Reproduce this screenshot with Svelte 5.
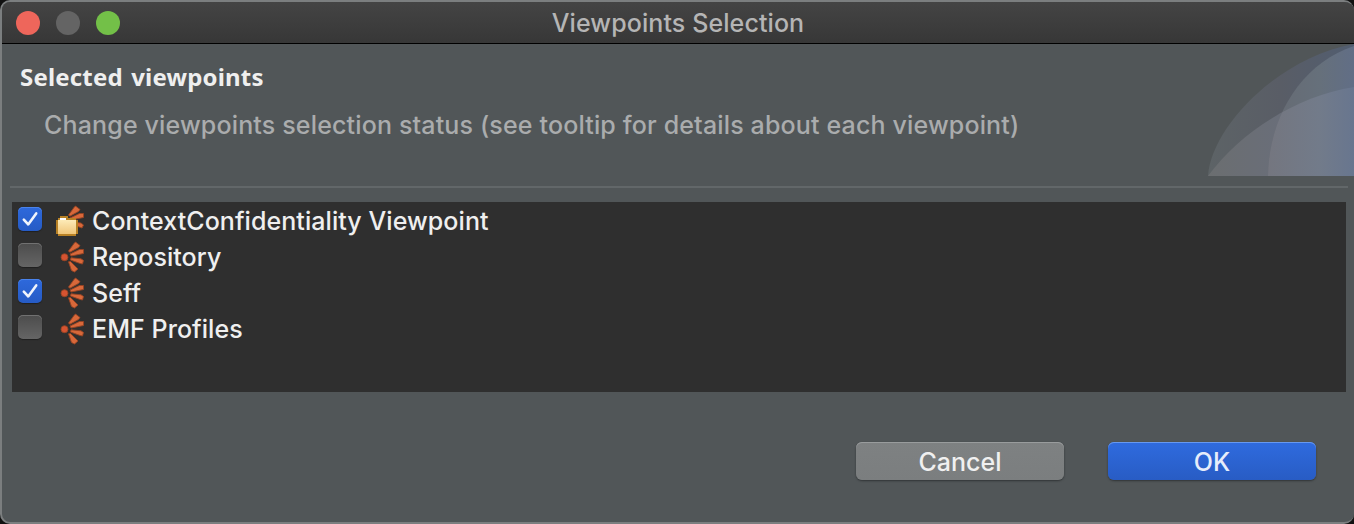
<script>
  let items = $state([
    { label: 'ContextConfidentiality Viewpoint', checked: true, folder: true },
    { label: 'Repository', checked: false, folder: false },
    { label: 'Seff', checked: true, folder: false },
    { label: 'EMF Profiles', checked: false, folder: false }
  ]);
</script>

<div class="window">
  <header class="titlebar">
    <div class="lights"><i class="close"></i><i class="minimise"></i><i class="zoom"></i></div>
    <span class="title">Viewpoints Selection</span>
  </header>

  <section class="banner">
    <div class="copy">
      <h1>Selected viewpoints</h1>
      <p>Change viewpoints selection status (see tooltip for details about each viewpoint)</p>
    </div>
    <svg class="art" width="146" height="132" viewBox="0 0 146 132">
      <defs>
        <linearGradient id="outer" x1="0" x2="1" y1="0" y2="0">
          <stop offset="0" stop-color="#5d6366" /><stop offset=".5" stop-color="#595d66" /><stop offset="1" stop-color="#515d70" />
        </linearGradient>
        <linearGradient id="low" x1="0" x2="1" y1="0" y2="0">
          <stop offset="0" stop-color="#6b6e70" /><stop offset=".6" stop-color="#696e7b" /><stop offset="1" stop-color="#626f88" />
        </linearGradient>
        <linearGradient id="inner" gradientUnits="userSpaceOnUse" x1="60" x2="146" y1="0" y2="0">
          <stop offset="0" stop-color="#666a72" /><stop offset=".6" stop-color="#66707b" /><stop offset="1" stop-color="#616e86" />
        </linearGradient>
        <linearGradient id="core" gradientUnits="userSpaceOnUse" x1="60" x2="146" y1="0" y2="0">
          <stop offset="0" stop-color="#74767f" /><stop offset=".6" stop-color="#727b8a" /><stop offset="1" stop-color="#68768f" />
        </linearGradient>
        <clipPath id="innerShape"><path d="M60 132C61 72 93 20 146 2V132Z" /></clipPath>
      </defs>
      <path fill="url(#outer)" d="M0 132C3 84 69 14 146 0V132Z" />
      <path fill="url(#low)" d="M0 132C32 88 89 52 146 43V132Z" />
      <path fill="url(#inner)" d="M60 132C61 72 93 20 146 2V132Z" />
      <path fill="url(#core)" clip-path="url(#innerShape)" d="M0 132C32 88 89 52 146 43V132Z" />
    </svg>
  </section>

  <div class="rule"></div>

  <ul class="list">
    {#each items as item}
      <li>
        <button class="check" class:on={item.checked} role="checkbox" aria-checked={item.checked} aria-label={item.label} onclick={() => (item.checked = !item.checked)}>
          {#if item.checked}
            <svg width="24" height="24" viewBox="0 0 24 24"><path d="M5.8 12.6 10.2 17.4 18.2 6.4" fill="none" stroke="#f0f4fc" stroke-width="2.6" stroke-linecap="round" stroke-linejoin="round" /></svg>
          {/if}
        </button>
        <svg class="icon" width="32" height="34" viewBox="0 0 32 34">
          <g fill="#d8683a" stroke="#984423" stroke-width=".9" stroke-linejoin="round">
            <path d="M14.5 11 20 3.5 21.5 2 26 5.5 24.5 7.5 15.8 12.3Z" />
            <path d="M16 14 25.5 9.5 29.5 9.5V13.5L17 16Z" />
            {#if item.folder}
              <path d="M17 18 27 19 29.5 21 28 24 17 20Z" />
            {:else}
              <path d="M17 17.8 27 18.8 29.5 20.5 28.5 24 25.5 23.3 16.5 20Z" />
              <path d="M14.5 21.8 16.5 21.5 24 29 20.5 32 17.5 30.5Z" />
              <circle cx="10.5" cy="17.2" r="3.5" fill="#d65331" />
            {/if}
          </g>
          {#if item.folder}
            <defs>
              <linearGradient id="paper" x2="0" y2="1"><stop stop-color="#fff0c0" /><stop offset="1" stop-color="#f0c67a" /></linearGradient>
            </defs>
            <path d="M6 12V14H4V16H2V30H4V32H22V30H24V16H22V14H14V12Z" fill="#b88125" />
            <path d="M6 14H12V16H22V30H4V16H6Z" fill="url(#paper)" />
            <path d="M6 14H12V16H6Z" fill="#fff" />
          {/if}
        </svg>
        <span class="label">{item.label}</span>
      </li>
    {/each}
  </ul>

  <footer>
    <button class="push cancel"><span>Cancel</span></button>
    <button class="push ok"><span>OK</span></button>
  </footer>
</div>

<style>
  :global(body) { background: #111; }
  * { box-sizing: border-box; }
  button { padding: 0; border: 0; font: inherit; }
  .window {
    width: 1354px; height: 524px; overflow: hidden;
    display: flex; flex-direction: column;
    border: solid #7b7e7f; border-width: 2px 0 2px 2px; border-radius: 10px;
    background: #515658; font: 450 25px/30px Inter, sans-serif;
  }
  .titlebar {
    height: 42px; flex: none; display: grid; grid-template-columns: 1fr auto 1fr; align-items: center;
    background: linear-gradient(#444, #373737); border-bottom: 1px solid #000;
  }
  .lights { display: flex; gap: 16px; padding-left: 14px; }
  .lights i { width: 24px; height: 24px; border-radius: 50%; }
  .close { background: #ee665b; }
  .minimise { background: #646464; }
  .zoom { background: #73c048; }
  .title { color: #b5b5b5; letter-spacing: 0.1px; }
  .banner { height: 132px; flex: none; display: flex; justify-content: space-between; }
  .copy { padding: 17px 0 0 18px; }
  h1 { margin: 0; font: bold 24px/32px "Noto Sans", sans-serif; letter-spacing: 0.18px; word-spacing: 2px; color: #efefef; }
  p { margin: 17px 0 0 24px; color: #aaacad; letter-spacing: 0.155px; white-space: nowrap; }
  .art { flex: none; }
  .rule { height: 2px; flex: none; margin: 10px 6px 14px 8px; background: #626769; }
  .list { width: 1334px; height: 190px; flex: none; margin: 0 0 0 10px; padding: 0; list-style: none; background: #2f2f2f; }
  li { height: 36px; display: flex; align-items: flex-start; padding-left: 6px; color: #efefef; }
  .check {
    width: 24px; height: 24px; margin-top: 5px; border-radius: 5px; flex: none;
    background: linear-gradient(#4c4c4c, #656565); box-shadow: inset 0 1px #717171, 0 1px 1px #202020;
  }
  .check.on { background: linear-gradient(#2e69dc, #265bc5); box-shadow: inset 0 1px #4a83ec, 0 1px 1px #202020; }
  .check svg { display: block; }
  .icon { flex: none; margin: 2px 0 0 12px; }
  .label { margin: 4px 0 0 6px; letter-spacing: 0.07px; white-space: nowrap; }
  footer { display: flex; justify-content: flex-end; gap: 44px; padding: 50px 38px 0 0; }
  .push {
    width: 208px; height: 38px; border-radius: 6px; color: #f0f0f0; line-height: 38px; padding-top: 1px;
    background: linear-gradient(#7e8182, #7b7e7f); box-shadow: inset 0 1px #999c9d, 0 1px 2px #303436;
  }
  .ok { background: linear-gradient(#2f6bdf, #285cc4); box-shadow: inset 0 1px #6799f0, 0 1px 2px #303436; color: #e6edfb; }
</style>
